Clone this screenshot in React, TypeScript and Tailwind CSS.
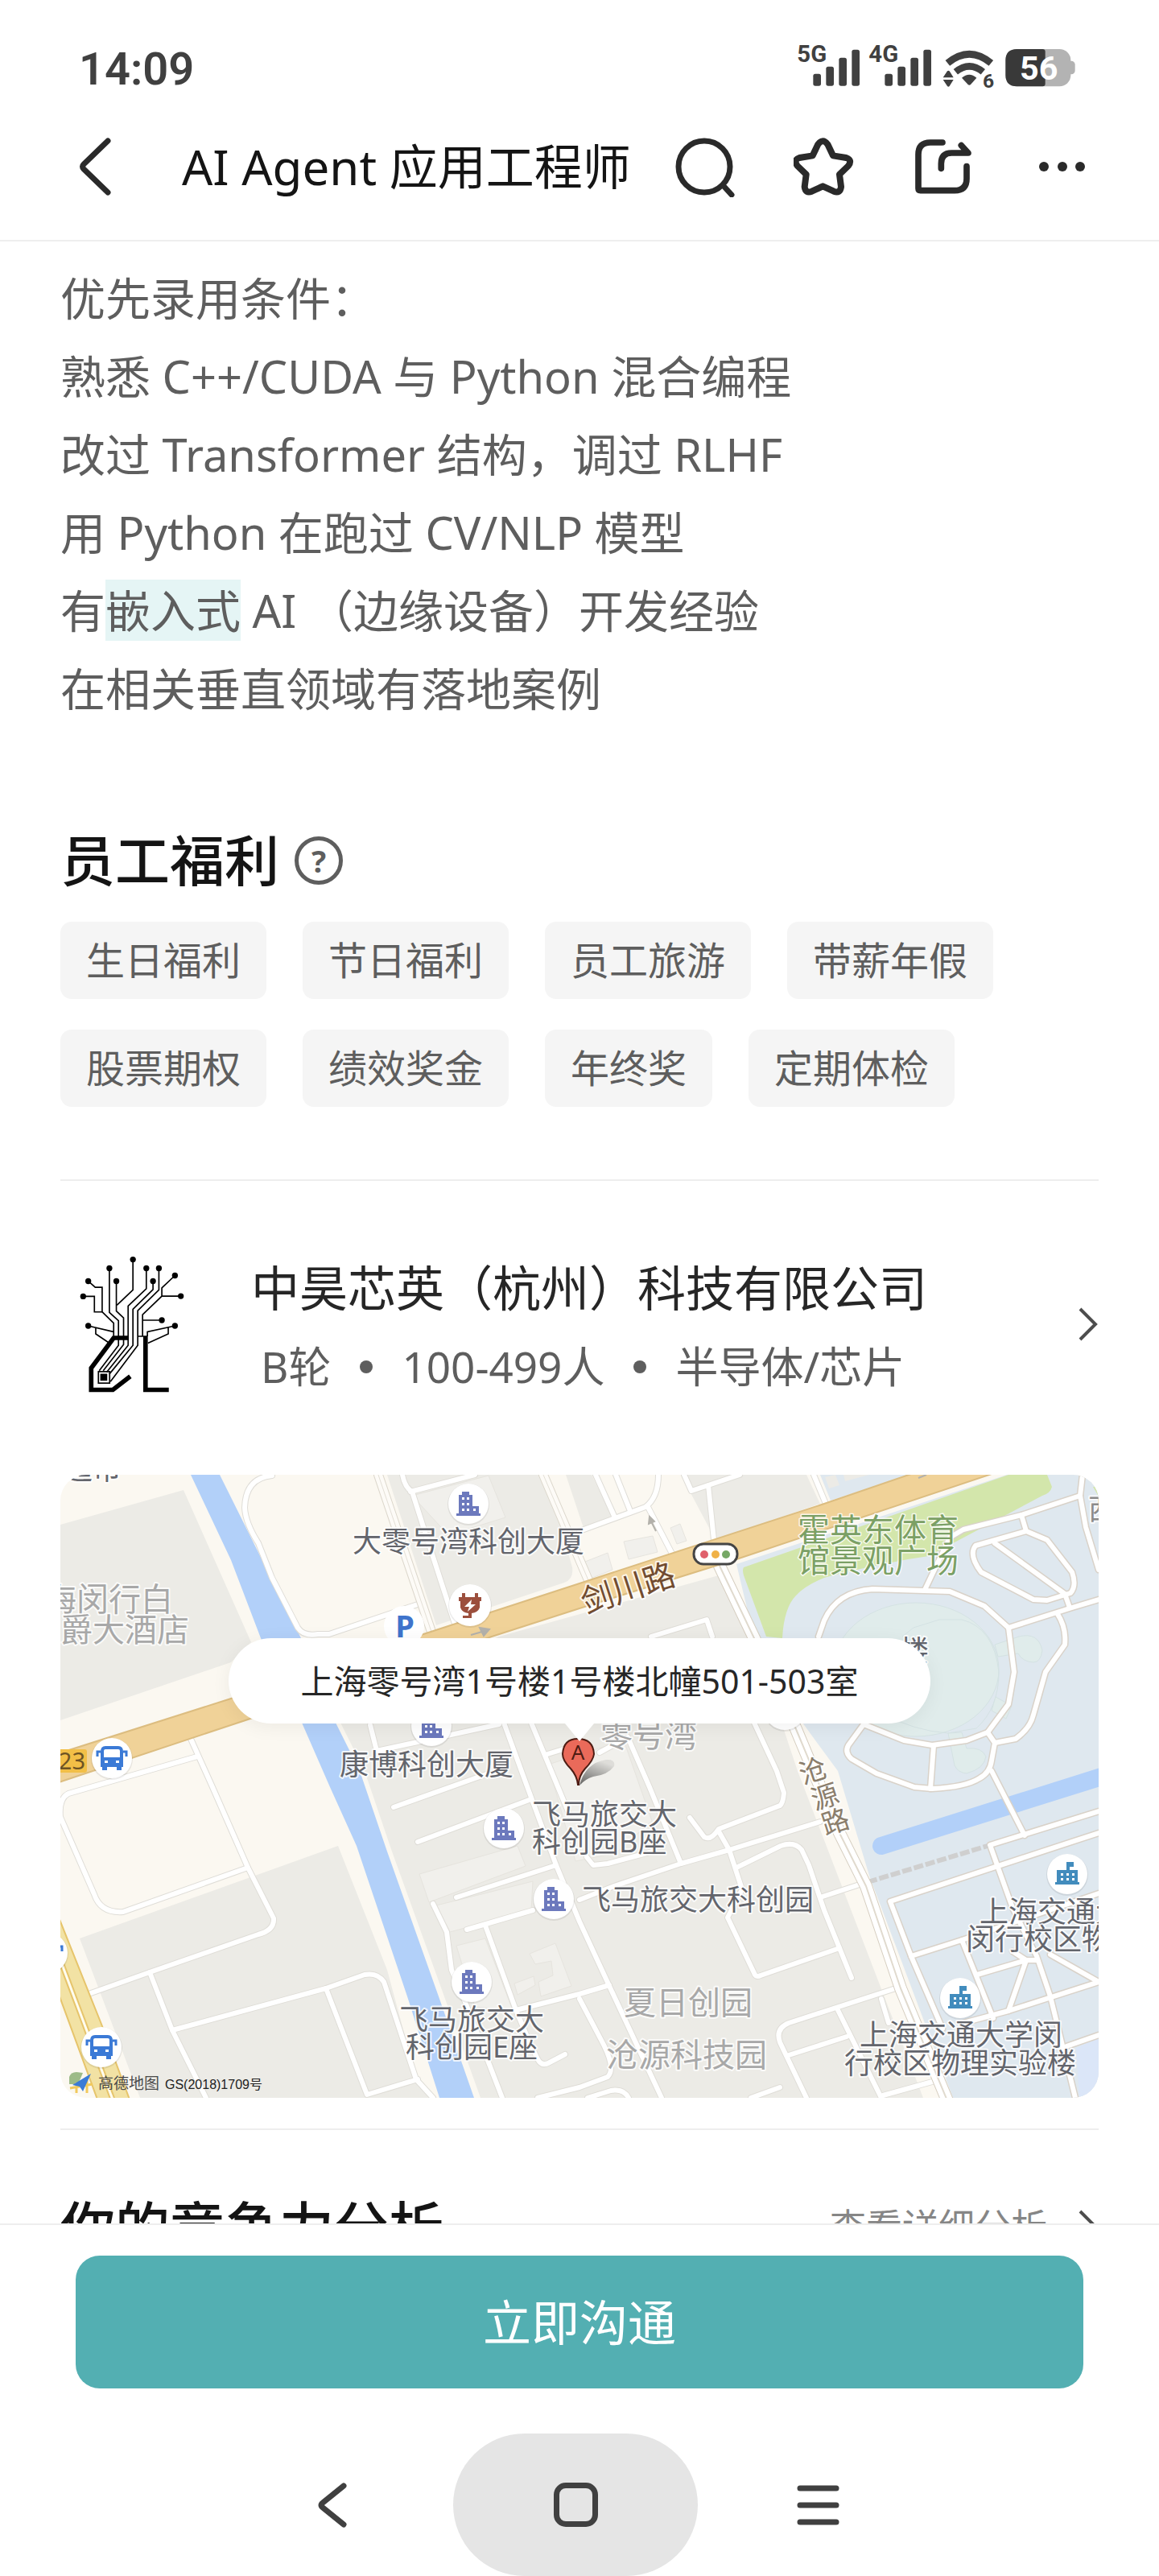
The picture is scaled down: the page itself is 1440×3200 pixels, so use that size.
import type { ReactNode } from "react";

const requirements = [
    "优先录用条件：",
    "熟悉 C++/CUDA 与 Python 混合编程",
    "改过 Transformer 结构，调过 RLHF",
    "用 Python 在跑过 CV/NLP 模型",
];

const benefits = ["生日福利", "节日福利", "员工旅游", "带薪年假", "股票期权", "绩效奖金", "年终奖", "定期体检"];

function Signal({ label }: { label: string }) {
    return (
        <svg className="h-16 w-[77px] overflow-visible" viewBox="92 70 231 192" fill="currentColor">
            <text x="90" y="138" fontSize="88" fontWeight="700">{label}</text>
            <rect x="150" y="183" width="29" height="45" rx="8" />
            <rect x="198" y="156" width="29" height="72" rx="8" />
            <rect x="246" y="123" width="29" height="105" rx="8" />
            <rect x="294" y="93" width="29" height="135" rx="8" />
        </svg>
    );
}

function Wifi() {
    return (
        <svg className="h-16 w-16" viewBox="628 70 192 192" fill="currentColor">
            <path d="M647 143Q728 76 809 143" fill="none" stroke="currentColor" strokeWidth="26" />
            <path d="M677 176Q728 134 779 176" fill="none" stroke="currentColor" strokeWidth="25" />
            <path d="M700 198Q728 174 755 198L733 223Q728 228 723 223Z" />
            <path d="M630 197L646 173Q650 169 654 173L669 197ZM630 205H669L654 229Q650 233 646 229Z" />
            <text x="778" y="235" fontSize="74" fontWeight="700">6</text>
        </svg>
    );
}

function Battery() {
    return (
        <svg className="h-16 w-[87px]" viewBox="868 70 261 192">
            <rect x="1096" y="135" width="32" height="50" rx="14" fill="#b3b3b3" />
            <rect x="869" y="91" width="243" height="139" rx="42" fill="#b3b3b3" />
            <path d="M911 91H1007Q1017 91 1017 101V220Q1017 230 1007 230H911Q869 230 869 188V133Q869 91 911 91Z" fill="#393939" />
            <text x="993" y="205" fontSize="124" fontWeight="700" textAnchor="middle" fill="#fff">56</text>
        </svg>
    );
}

function IconButton({ label, viewBox, children }: { label: string; viewBox: string; children: ReactNode }) {
    return (
        <button type="button" aria-label={label} className="text-[#2a2a2a]">
            <svg className="size-[76px]" viewBox={viewBox} fill="none" stroke="currentColor" strokeLinecap="round" strokeLinejoin="round">
                {children}
            </svg>
        </button>
    );
}

function Header() {
    return (
        <header className="shrink-0 border-b-2 border-[#eeeeee]">
            <div className="flex h-[116px] items-center justify-between pt-14 pr-[104px] pl-[98px] font-['Roboto',sans-serif] text-[#404040]">
                <span className="text-[56px] leading-[60px] font-semibold">14:09</span>
                <div className="flex items-center gap-3.5">
                    <div className="flex gap-3">
                        <Signal label="5G" />
                        <Signal label="4G" />
                    </div>
                    <Wifi />
                    <Battery />
                </div>
            </div>
            <div className="flex h-[182px] items-center pr-[82px] pl-[94px]">
                <button type="button" aria-label="返回" className="text-[#2a2a2a]">
                    <svg className="h-20 w-12" viewBox="0 0 48 80" fill="none" stroke="currentColor" strokeWidth="7" strokeLinecap="round" strokeLinejoin="round">
                        <path d="M40 8L10 37Q7 40 10 43L40 72" />
                    </svg>
                </button>
                <h1 className="ml-[84px] text-[60px] leading-[80px] text-[#141414]">AI Agent 应用工程师</h1>
                <div className="ml-auto flex items-center gap-[72px]">
                    <IconButton label="搜索" viewBox="0 0 76 76">
                        <g strokeWidth="7">
                            <circle cx="37" cy="38" r="32" />
                            <path d="M61 62L71 73" />
                        </g>
                    </IconButton>
                    <IconButton label="收藏" viewBox="72 417 228 228">
                        <path strokeWidth="24" d="M163 448Q181 424 199 448L219 490L268 498Q292 506 276 528L243 560L249 606Q246 632 222 623L181 604L140 623Q116 632 113 606L119 560L86 528Q70 506 94 498L143 490Z" />
                    </IconButton>
                    <IconButton label="分享" viewBox="519 417 228 228">
                        <g strokeWidth="23">
                            <path d="M630 441H585Q540 441 540 486V612Q540 620 548 620H675Q720 620 720 576V530" />
                            <path d="M625 538V520Q625 480 664 480H726L700 452" />
                        </g>
                    </IconButton>
                    <IconButton label="更多" viewBox="0 0 76 76">
                        <g fill="currentColor" stroke="none">
                            <circle cx="15" cy="38" r="6" />
                            <circle cx="38" cy="38" r="6" />
                            <circle cx="60" cy="38" r="6" />
                        </g>
                    </IconButton>
                </div>
            </div>
        </header>
    );
}

function CompanyLogo() {
    const nodes = [
        [316, 134], [228, 167], [254, 215], [149, 215], [130, 272], [366, 167], [391, 215],
        [413, 167], [473, 194], [495, 271], [424, 361], [149, 382], [473, 382],
    ];
    return (
        <svg className="h-[180px] w-[133px] shrink-0" viewBox="114 118 400 540" fill="none" stroke="#000">
            <g strokeWidth="5">
                <path d="M316 134V248L256 305" />
                <path d="M228 167V332L262 363V455L190 550" />
                <path d="M254 215V327L281 352V452L205 550" />
                <path d="M149 215L175 238H201V330L244 372V420" />
                <path d="M130 272H172V330H201" />
                <path d="M366 167V243L298 308V455L218 555" />
                <path d="M391 215V246L316 320V455L228 562" />
                <path d="M413 167V248L334 325V455L232 590" />
                <path d="M473 194L424 240V271L352 340V421H334" />
                <path d="M424 271H495M424 361H352" />
                <path d="M149 382L243 404M177 388V412L226 445" />
                <path d="M473 382L370 404V421M448 388V412L372 447" />
                <rect x="187" y="553" width="42" height="43" />
            </g>
            <rect x="194" y="561" width="26" height="26" fill="#000" stroke="none" />
            <g strokeWidth="17">
                <path d="M298 427H244L160 540V621H241L306 571" />
                <path d="M363 419V621H450" />
            </g>
            {nodes.map(([x, y]) => (
                <circle key={`${x}-${y}`} cx={x} cy={y} r="11" fill="#000" stroke="none" />
            ))}
        </svg>
    );
}

// white roads inside the built-up blocks
const streets = [
    "M263 1Q230 4 229 41Q230 60 246 85L263 128L295 190Q302 201 320 198L334 198L444 161",
    "M425 0Q428 16 437 21L452 68L490 185",
    "M435 21L515 0",
    "M162 328L189 388L233 488L265 551Q266 566 246 571L111 618L35 645",
    "M170 350L10 396Q-2 402 0 425L42 521Q50 545 78 543L233 488",
    "M111 618L139 690L181 774",
    "M139 690L330 638L378 621Q394 618 402 630L442 751L463 774",
    "M330 638L381 770L444 751",
    "M414 413L532 371",
    "M444 456L585 403",
    "M551 308L574 371L616 485L645 555L682 635L747 774",
    "M585 308L632 421",
    "M602 348L628 340",
    "M492 525L616 485",
    "M463 533L480 568L486 615L503 655L549 774",
    "M505 565L587 541",
    "M528 560L566 665L583 705L593 726Q598 735 606 731L627 720",
    "M566 665L645 645L682 634",
    "M593 774L645 761L680 748Q690 738 675 708L645 651",
    "M393 343L385 311M393 343L545 310",
    "M645 70L727 40Q743 28 743 0",
    "M665 0L688 51M690 0L708 45",
    "M730 40L760 98",
    "M775 0L784 20L805 13L844 0M805 13L812 81",
    "M936 0L951 36",
    "M734 201L803 180L810 201",
    "M670 345L705 326L732 388L771 483",
    "M862 308L890 368L899 395Q898 408 894 411L818 440Q808 455 800 450L782 426",
    "M645 528L688 511L771 483L831 466L944 431",
    "M818 443L831 466L847 515L829 550L862 619Q864 625 870 622L968 588",
    "M840 488L895 461Q912 455 921 466L930 485L949 541L983 625",
    "M944 525L996 508",
    "M1044 636L905 681Q888 688 894 705L927 774",
    "M966 665L1020 774M905 721L977 698",
    "M1020 651L1029 681",
    "M1022 771L1094 751M858 774L894 761",
    "M655 774L684 765Q700 762 706 774",
    "M654 475L662 485L680 483L736 468",
];

const campusRoads = [
    "M942 201L949 181Q965 145 1009 142L1105 145L1148 163L1178 190L1185 245L1178 285L1152 320L1126 330L1083 336L1048 330L998 310",
    "M998 310L979 336Q974 345 983 353L1014 371L1061 388L1083 390Q1125 388 1142 377Q1155 370 1157 355L1161 333L1152 320",
    "M1161 333L1187 328Q1205 315 1209 298L1224 245L1248 211Q1250 190 1239 173",
    "M1178 190L1257 165L1290 155",
    "M1074 143L1105 78L1122 68L1194 50L1267 26L1270 0",
    "M1267 26L1274 65L1290 118",
    "M1194 50L1200 70",
    "M1200 70L1137 88Q1128 100 1144 121L1209 155L1226 156L1255 147Q1263 138 1257 121L1226 81Z",
    "M1161 85L1248 148L1254 165",
    "M1085 336L1081 390",
    "M1157 368L1198 448",
    "M1290 418L1155 460L1183 538L1213 598L1230 648L1261 774",
    "M1290 445L1031 530L1057 598L1096 688",
    "M1057 598L1120 578L1159 675",
    "M1139 621L1200 603L1178 666",
    "M1200 603H1213M1183 592L1200 603M1230 596L1290 630",
    "M1122 681L1178 666L1290 630",
    "M1120 578L1290 520",
    "M1250 710L1290 696",
];

const officePins = [[507, 36], [461, 312], [551, 439], [613, 527], [511, 630]];
const schoolPins = [[1251, 496], [1118, 650]];
const busPins = [[64, 352], [51, 711], [900, 292], [-16, 594]];

function OfficePin({ x, y }: { x: number; y: number }) {
    return (
        <g transform={`translate(${x} ${y})`}>
            <circle cy="1" r="26" fill="#00000014" />
            <circle r="25" fill="#fff" />
            <path d="M-12 12V-11H-8V-15H1V-11H5V3H13V12H15V15H-15V12Z" fill="#6c79bd" />
            <path d="M-8-8h3v3h-3zM-2-8h3v3h-3zM-8-1h3v3h-3zM-2-1h3v3h-3zM-8 6h3v3h-3zM-2 6h3v3h-3zM6 6h3v3h-3z" fill="#fff" />
        </g>
    );
}

function SchoolPin({ x, y }: { x: number; y: number }) {
    return (
        <g transform={`translate(${x} ${y})`}>
            <circle cy="1" r="26" fill="#00000014" />
            <circle r="25" fill="#fff" />
            <path d="M-1-15H8V-9H3V-5H13V10H15V13H-15V10H-13V-5H-1Z" fill="#428cbd" />
            <path d="M-8-1h3v3h-3zM-1-1h3v3h-3zM6-1h3v3h-3zM-8 5h3v3h-3zM-1 5h3v3h-3zM6 5h3v3h-3z" fill="#fff" />
        </g>
    );
}

function BusPin({ x, y }: { x: number; y: number }) {
    return (
        <g transform={`translate(${x} ${y})`}>
            <circle cy="1" r="26" fill="#00000014" />
            <circle r="25" fill="#fff" />
            <path d="M-14-8Q-14-15-8-15H8Q14-15 14-8V11H12V15H6V11H-6V15H-12V11H-14Z" fill="#3b7ad6" />
            <path d="M-14-8H-18V-2M14-8H18V-2" fill="none" stroke="#3b7ad6" strokeWidth="3" />
            <path d="M-10-9Q-10-11-8-11H8Q10-11 10-9V-1H-10ZM-9 3h4v3h-4zM5 3h4v3h-4z" fill="#fff" />
        </g>
    );
}

function MapCanvas() {
    return (
        <svg className="block h-auto w-full" viewBox="0 0 1290 774" role="img" aria-label="公司位置地图">
            <rect width="1290" height="774" fill="#fbf8f1" />
            <g fill="#ecebe6">
                <path d="M0 62L153 19L237 208L212 233L0 305Z" />
                <path d="M406 0H604L636 115Q638 130 626 134L467 187Z" />
                <path d="M628 0H660L686 53L650 66Z" />
                <path d="M771 0H927L944 36L814 81Z" />
                <path d="M545 201L818 125L857 203L896 308L916 368L1072 774H522L478 651L412 468L378 368L348 308L345 290Z" />
                <path d="M24 576L345 461L406 615L440 741L463 774H99Z" />
            </g>
            <g fill="#f1f0ec" stroke="#e6e4de" strokeWidth="1">
                <path d="M437 26L532 1L553 53L482 75Z" />
                <path d="M446 496L568 461L578 486L458 531Z" />
                <path d="M467 535L587 505L585 541L484 568Z" />
                <path d="M492 585L528 576L562 665L515 661Z" />
                <path d="M583 595L615 582L635 635L597 648L594 630L612 622L610 604L590 608Z" />
                <path d="M564 632L588 623L590 634L568 646Z" />
                <path d="M652 108L680 97L686 118L656 130ZM700 83L736 76L742 96L706 105ZM758 66L770 61L778 82L766 86Z" />
                <path d="M606 360L700 330L735 430L690 470L640 480Z" />
            </g>
            <path d="M840 111L1176 0H1290V774H1109L1005 498L966 368L922 308L862 203ZM944 0H1055L957 32Z" fill="#dfe8ef" />
            <path d="M849 115L1178 0H1226L1232 15Q1230 23 1220 26L1079 101L1053 105Q975 120 949 128Q925 138 914 150Q899 165 897 203L877 201L849 125Q847 118 849 115Z" fill="#d3e6ab" />
            <path d="M950 3L955 17L968 13L963 0ZM975 8L1020 -4L1015 -10L972 -4Z" fill="#ecebe6" />
            <path d="M1283 15L1290 14V27Z" fill="#d3e6ab" />
            <path d="M1262 712L1290 700V774H1266Z" fill="#dbe6f8" />

            <g fill="#e0eceb" stroke="#d4e2e3" strokeWidth="1">
                <ellipse cx="1063" cy="242" rx="103" ry="83" />
                <path d="M1046 201L1060 190L1092 180H1120Q1160 190 1166 245Q1166 290 1138 315L1103 321Q1060 318 1020 296" fill="none" />
                <path d="M1161 211L1191 201Q1215 195 1220 218Q1218 233 1209 233Q1195 232 1190 222L1165 226Z" />
                <path d="M1162 276L1182 287L1175 303L1157 293Z" />
                <path d="M1103 321L1120 320L1126 340Q1145 338 1150 350Q1148 365 1126 371Q1115 370 1111 361Z" />
            </g>
            <path d="M1020 461L1300 373" stroke="#b2d0f9" strokeWidth="22" strokeLinecap="round" />
            <path d="M162 0H198L299 203L342 308L372 368L406 468L471 651L514 774H471L431 648L368 461L335 388L300 308L249 203L212 106Z" fill="#b2d0f9" />

            <g fill="none" strokeLinejoin="round" strokeLinecap="round">
                {streets.map((d) => (
                    <path key={d} d={d} stroke="#dfddd7" strokeWidth="8" />
                ))}
                {streets.map((d) => (
                    <path key={d} d={d} stroke="#ffffff" strokeWidth="6" />
                ))}
                {campusRoads.map((d) => (
                    <path key={d} d={d} stroke="#d9d2c9" strokeWidth="9" />
                ))}
                {campusRoads.map((d) => (
                    <path key={d} d={d} stroke="#ffffff" strokeWidth="6" />
                ))}
                <path d="M1003 506L1152 461" stroke="#cfcfcf" strokeWidth="6" strokeDasharray="12 3" strokeLinecap="butt" />
                <path d="M395 0L461 195M600 0L656 131" stroke="#dcd7cc" strokeWidth="12" />
                <path d="M395 0L461 195M600 0L656 131" stroke="#fdfbf7" strokeWidth="10" />
                <path d="M395 0L461 195M600 0L656 131" stroke="#e3dfd6" strokeWidth="1" />
                <path d="M818 111L862 203L914 316L968 445L1001 511L1044 638L1103 780" stroke="#d6cec0" strokeWidth="16" />
                <path d="M818 111L862 203L914 316L968 445L1001 511L1044 638L1103 780" stroke="#ffffff" strokeWidth="14" />
                <path d="M818 111L862 203L914 316L968 445L1001 511L1044 638L1103 780" stroke="#e0dace" strokeWidth="2" />
            </g>

            <path d="M-5 347L212 278L448 199L645 135L949 36L1060 -2L1160 -2L840 105L645 166L536 201L236 303L-5 383Z" fill="#f0d298" stroke="#dcbd80" strokeWidth="2" />
            <path d="M-4 545L52 685L86 776H46L-4 640Z" fill="#f2e2a4" stroke="#e6c46b" strokeWidth="2" />
            <path d="M0 603L65 776" stroke="#e6c46b" strokeWidth="7" />
            <path d="M0 603L65 776" stroke="#fffdf0" strokeWidth="3" />

            <g fill="#b3b1ab" stroke="#b3b1ab" strokeWidth="2">
                <path d="M740 70L734 58M731 61L732 52L738 58Z" />
                <path d="M510 199L524 195M521 190L533 192L526 200Z" />
                <path d="M1066 4L1076 0" />
            </g>

            {officePins.map(([x, y]) => <OfficePin key={`${x}-${y}`} x={x} y={y} />)}
            {schoolPins.map(([x, y]) => <SchoolPin key={`${x}-${y}`} x={x} y={y} />)}
            {busPins.map(([x, y]) => <BusPin key={`${x}-${y}`} x={x} y={y} />)}

            <circle cx="427" cy="188" r="25" fill="#fff" />
            <text x="428" y="202" fontSize="38" fontWeight="700" textAnchor="middle" fill="#3f74cc">P</text>

            <g transform="translate(509 162)">
                <circle cy="1" r="27" fill="#00000014" />
                <circle r="26" fill="#fff" />
                <path d="M-8-15V-9M8-15V-9" stroke="#9c4f3d" strokeWidth="4" />
                <path d="M-14-10H14V-5H12V3Q10 9 2 10V16H-9V13H-2V10Q-10 9-12 3V-5H-14Z" fill="#9c4f3d" />
                <path d="M2-7L-7 2H-1L-3 8L7-1H1Z" fill="#fff" />
            </g>

            <rect x="-10" y="341" width="43" height="29" rx="3" fill="#f2bf47" />
            <text x="31" y="366" fontSize="29" textAnchor="end" fill="#6e5424">23</text>

            <rect x="787" y="86" width="54" height="25" rx="12" fill="#fff" stroke="#454545" strokeWidth="3" />
            <circle cx="800" cy="99" r="5" fill="#e0606c" />
            <circle cx="814" cy="99" r="5" fill="#f0b146" />
            <circle cx="827" cy="99" r="5" fill="#76a866" />

            <g className="[paint-order:stroke]" stroke="#ffffffcc" strokeWidth="4" strokeLinejoin="round" fontSize="36" fill="#63656c">
                <text x="76" y="6" textAnchor="end">超市</text>
                <text x="507" y="96" textAnchor="middle">大零号湾科创大厦</text>
                <text x="455" y="373" textAnchor="middle">康博科创大厦</text>
                <text>
                    <tspan x="586" y="435">飞马旅交大</tspan>
                    <tspan x="586" y="469">科创园B座</tspan>
                </text>
                <text x="792" y="541" textAnchor="middle">飞马旅交大科创园</text>
                <text textAnchor="middle">
                    <tspan x="511" y="690">飞马旅交大</tspan>
                    <tspan x="511" y="724">科创园E座</tspan>
                </text>
                <text>
                    <tspan x="1142" y="556">上海交通大学</tspan>
                    <tspan x="1125" y="590">闵行校区物理</tspan>
                </text>
                <text textAnchor="middle">
                    <tspan x="1119" y="709">上海交通大学闵</tspan>
                    <tspan x="1118" y="744">行校区物理实验楼</tspan>
                </text>
                <text x="1079" y="232" textAnchor="end">楼</text>
                <text x="1277" y="56" fill="#8b8b8b">西</text>
                <g fontSize="34" fill="#8b7e6c">
                    <text x="935" y="380" textAnchor="middle" transform="rotate(-18 935 368)">沧</text>
                    <text x="950" y="412" textAnchor="middle" transform="rotate(-18 950 400)">源</text>
                    <text x="963" y="443" textAnchor="middle" transform="rotate(-18 963 431)">路</text>
                </g>
                <text x="706" y="155" fontSize="40" textAnchor="middle" fill="#724c30" transform="rotate(-18 706 143)">剑川路</text>
                <text fontSize="40" fill="#7ba065" strokeWidth="3" textAnchor="middle">
                    <tspan x="1016" y="83">霍英东体育</tspan>
                    <tspan x="1016" y="121">馆景观广场</tspan>
                </text>
                <g fontSize="40" fill="#a8a8a8">
                    <text textAnchor="end">
                        <tspan x="140" y="169">上海闵行白</tspan>
                        <tspan x="160" y="207">金汉爵大酒店</tspan>
                    </text>
                    <text x="671" y="338">零号湾</text>
                    <text x="780" y="670" textAnchor="middle">夏日创园</text>
                    <text x="778" y="735" textAnchor="middle">沧源科技园</text>
                </g>
            </g>

            <defs>
                <linearGradient id="pinShadow" x1="0" y1="1" x2="0.5" y2="0">
                    <stop offset="0" stopColor="#000" stopOpacity="0.6" />
                    <stop offset="1" stopColor="#000" stopOpacity="0.08" />
                </linearGradient>
            </defs>
            <path d="M645 386Q652 358 678 354Q690 353 688 362Q680 373 662 375Q652 378 645 386Z" fill="url(#pinShadow)" />
            <path d="M643 385Q642 374 634 365Q624 355 624 347Q625 328 643 328Q662 328 663 347Q662 355 652 365Q644 374 644 385Z" fill="#ea6a5a" stroke="#4d1c13" strokeWidth="2" />
            <text x="643" y="354" fontSize="26" textAnchor="middle" fill="#4d1c13">A</text>

            <g>
                <path d="M11 748Q13 742 20 742L28 743L22 757L11 757Z" fill="#9dbb88" />
                <path d="M12 762L40 757M20 755V768M33 752V768" stroke="#f1c95c" strokeWidth="3" />
                <path d="M38 744L15 758L24 760L28 766Z" fill="#3b7bd6" />
                <text x="47" y="763" fontSize="19" fill="#4a4a4a">高德地图</text>
                <text className="font-['Liberation_Sans','Noto_Sans_CJK_SC',sans-serif]" x="130" y="763" fontSize="16" fill="#222">GS(2018)1709号</text>
            </g>
        </svg>
    );
}

function LocationMap() {
    return (
        <div className="relative overflow-hidden rounded-[32px]">
            <MapCanvas />
            <div className="absolute inset-x-0 top-[203px] flex justify-center">
                <div className="relative rounded-full bg-white px-[90px] py-[22px] text-[41px] leading-[62px] text-[#262626] shadow-[0_4px_24px_rgba(0,0,0,0.06)]">
                    上海零号湾1号楼1号楼北幢501-503室
                    <svg className="absolute top-full left-1/2 -ml-[18px] h-[22px] w-9" viewBox="0 0 36 22">
                        <path d="M0 0H36L18 22Z" fill="#fff" />
                    </svg>
                </div>
            </div>
        </div>
    );
}

function Chevron() {
    return (
        <svg className="h-[42px] w-[26px] shrink-0" viewBox="0 0 26 42" fill="none" stroke="#4d4d4d" strokeWidth="4">
            <path d="M3 2L22 21L3 40" />
        </svg>
    );
}

function BottomBar() {
    return (
        <footer className="shrink-0 border-t-2 border-[#eeeeee]">
            <div className="px-[94px] pt-[38px]">
                <button type="button" className="block h-[165px] w-full rounded-[30px] bg-[#53afb2] text-[60px] text-white">
                    立即沟通
                </button>
            </div>
            <nav className="mt-14 flex justify-center gap-[75px] pr-2.5 text-[#404040]">
                <button type="button" aria-label="后退" className="flex w-[150px] items-center justify-center">
                    <svg className="h-[60px] w-10" viewBox="0 0 40 60" fill="none" stroke="currentColor" strokeWidth="7" strokeLinecap="round" strokeLinejoin="round">
                        <path d="M34 6L8 27Q4 30 8 33L34 54" />
                    </svg>
                </button>
                <button type="button" aria-label="主页" className="flex h-[177px] w-[304px] items-center justify-center rounded-full bg-[#e5e5e5]">
                    <span className="size-[55px] rounded-[15px] border-[7px] border-[#404040]" />
                </button>
                <button type="button" aria-label="菜单" className="flex w-[150px] items-center justify-center">
                    <svg className="h-[60px] w-14" viewBox="0 0 56 60" stroke="currentColor" strokeWidth="7" strokeLinecap="round">
                        <path d="M5 9H50M5 30H50M5 51H50" />
                    </svg>
                </button>
            </nav>
        </footer>
    );
}

export default function App() {
    return (
        <div className="flex h-screen flex-col bg-white font-['Noto_Sans','Noto_Sans_CJK_SC',sans-serif]">
            <Header />
            <main className="min-h-0 flex-1 overflow-hidden px-[75px]">
                <section className="pt-[22px] text-[56px] leading-[97px] text-[#5e5e5e]">
                    {requirements.map((line) => (
                        <p key={line}>{line}</p>
                    ))}
                    <p>
                        有<mark className="bg-[#e5f5f5] text-inherit">嵌入式</mark> AI （边缘设备）开发经验
                    </p>
                    <p>在相关垂直领域有落地案例</p>
                </section>

                <section className="mt-[125px] border-b-2 border-[#eeeeee] pb-[90px]">
                    <div className="flex items-center gap-[19px]">
                        <h2 className="text-[68px] leading-[80px] font-medium text-[#141414]">员工福利</h2>
                        <button type="button" aria-label="福利说明" className="flex size-[60px] items-center justify-center rounded-full border-[5px] border-[#5e5e5e] text-[38px] leading-none font-bold text-[#5e5e5e]">
                            ?
                        </button>
                    </div>
                    <ul className="mt-9 flex flex-wrap gap-x-[45px] gap-y-[38px]">
                        {benefits.map((item) => (
                            <li key={item} className="rounded-[14px] bg-[#f5f5f5] px-8 text-[48px] leading-[96px] text-[#5e5e5e]">
                                {item}
                            </li>
                        ))}
                    </ul>
                </section>

                <section className="border-b-2 border-[#eeeeee] pb-[38px]">
                    <a href="#company" className="flex items-center pt-[85px] pb-[86px] pl-[23px]">
                        <CompanyLogo />
                        <div className="ml-[81px] leading-[97px]">
                            <h3 className="text-[60px] text-[#262626]">中昊芯英（杭州）科技有限公司</h3>
                            <p className="flex items-center gap-9 pl-3 text-[53px] text-[#5e5e5e]">
                                <span>B轮</span>
                                <i className="size-4 rounded-full bg-[#5e5e5e]" />
                                <span>100-499人</span>
                                <i className="size-4 rounded-full bg-[#5e5e5e]" />
                                <span>半导体/芯片</span>
                            </p>
                        </div>
                        <span className="ml-auto pb-2">
                            <Chevron />
                        </span>
                    </a>
                    <LocationMap />
                </section>

                <section className="flex items-center justify-between pt-[80px]">
                    <h2 className="text-[68px] leading-[80px] font-medium text-[#141414]">你的竞争力分析</h2>
                    <a href="#analysis" className="flex items-center gap-[38px] text-[45px] text-[#868686]">
                        查看详细分析
                        <Chevron />
                    </a>
                </section>
            </main>
            <BottomBar />
        </div>
    );
}
